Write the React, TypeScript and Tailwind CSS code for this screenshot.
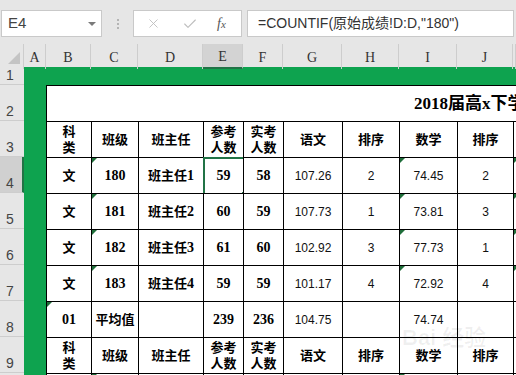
import { X, Check } from 'lucide-react';

type Kind = 'h' | 'b' | 'n';
type Cell = { t: string; k: Kind; tri?: boolean; sel?: boolean };

const headerRow: Cell[] = [
  { t: '科\n类', k: 'h' },
  { t: '班级', k: 'h' },
  { t: '班主任', k: 'h' },
  { t: '参考\n人数', k: 'h' },
  { t: '实考\n人数', k: 'h' },
  { t: '语文', k: 'h' },
  { t: '排序', k: 'h' },
  { t: '数学', k: 'h' },
  { t: '排序', k: 'h' },
  { t: '', k: 'h' },
];

const dataRows: [string, string, string, string, string, string, string, string, string][] = [
  ['文', '180', '班主任1', '59', '58', '107.26', '2', '74.45', '2'],
  ['文', '181', '班主任2', '60', '59', '107.73', '1', '73.81', '3'],
  ['文', '182', '班主任3', '61', '60', '102.92', '3', '77.73', '1'],
  ['文', '183', '班主任4', '59', '59', '101.17', '4', '72.92', '4'],
];

function buildRows(): Cell[][] {
  const rows: Cell[][] = [headerRow];
  dataRows.forEach((r, i) => {
    rows.push([
      { t: r[0], k: 'b' },
      { t: r[1], k: 'b', tri: true },
      { t: r[2], k: 'b' },
      { t: r[3], k: 'b', sel: i === 0 },
      { t: r[4], k: 'b' },
      { t: r[5], k: 'n' },
      { t: r[6], k: 'n' },
      { t: r[7], k: 'n', tri: true },
      { t: r[8], k: 'n' },
      { t: '', k: 'n', tri: true },
    ]);
  });
  rows.push([
    { t: '01', k: 'b', tri: true },
    { t: '平均值', k: 'b' },
    { t: '', k: 'b' },
    { t: '239', k: 'b' },
    { t: '236', k: 'b' },
    { t: '104.75', k: 'n' },
    { t: '', k: 'n' },
    { t: '74.74', k: 'n' },
    { t: '', k: 'n' },
    { t: '', k: 'n' },
  ]);
  rows.push(headerRow);
  rows.push([
    { t: '', k: 'n' },
    { t: '', k: 'n', tri: true },
    { t: '', k: 'n' },
    { t: '', k: 'n' },
    { t: '', k: 'n' },
    { t: '', k: 'n' },
    { t: '', k: 'n' },
    { t: '', k: 'n', tri: true },
    { t: '', k: 'n' },
    { t: '', k: 'n' },
  ]);
  return rows;
}

const kindClass: Record<Kind, string> = {
  h: "font-bold text-[13px] leading-[16px] text-black font-['Liberation_Serif','Noto_Sans_CJK_SC',serif]",
  b: "font-bold text-[13px] leading-[16px] text-black font-['Liberation_Serif','Noto_Sans_CJK_SC',serif]",
  n: "font-normal text-[12px] leading-[14px] text-[#111] font-['Liberation_Sans','Noto_Sans_CJK_SC',sans-serif]",
};

function renderText(t: string, k: Kind) {
  if (k !== 'b') return t;
  // digits a touch larger, as in the reference
  const parts = t.split(/(\d+)/).filter((p) => p !== '');
  return parts.map((p, i) =>
    /^\d+$/.test(p) ? (
      <span key={i} className="text-[14px]">
        {p}
      </span>
    ) : (
      <span key={i}>{p}</span>
    ),
  );
}

function TableCell({ c }: { c: Cell }) {
  const lines = c.t.split('\n');
  return (
    <div className="relative flex flex-col items-center justify-center border-l border-t border-black bg-white">
      {c.tri && (
        <div className="absolute left-0 top-0 h-0 w-0 border-t-[5px] border-r-[5px] border-t-[#1f6e3a] border-r-transparent" />
      )}
      {lines.map((l, i) => (
        <span key={i} className={kindClass[c.k] + ' whitespace-nowrap'}>
          {renderText(l, c.k)}
        </span>
      ))}
      {c.sel && (
        <div className="absolute -left-[1px] -top-[1px] h-[38px] w-[42px] border-2 border-[#217346]">
          <div className="absolute -bottom-[4px] -right-[4px] h-[5px] w-[5px] bg-[#217346]" />
        </div>
      )}
    </div>
  );
}

const colLetters = ['', 'A', 'B', 'C', 'D', 'E', 'F', 'G', 'H', 'I', 'J', ''];

export default function App() {
  const rows = buildRows();
  const rowLabels = ['1', '2', '3', '4', '5', '6', '7', '8', '9', ''];
  return (
    <div className="relative h-[375px] w-[516px] overflow-hidden bg-[#e6e6e6] font-['Liberation_Sans','Noto_Sans_CJK_SC',sans-serif]">
      {/* Formula bar */}
      <div className="flex h-[44px] items-start pt-[10px]">
        <div className="ml-[1px] flex h-[27px] w-[101px] items-center justify-between border border-[#c9c9c9] bg-white pl-[6px] pr-[5px]">
          <span className="text-[15px] text-[#444]">E4</span>
          <div className="h-0 w-0 border-x-[4px] border-t-[4px] border-x-transparent border-t-[#7a7a7a]" />
        </div>
        <div className="flex h-[27px] w-[31px] flex-col items-center justify-center gap-[2px]">
          <div className="h-[2px] w-[2px] bg-[#b4b4b4]" />
          <div className="h-[2px] w-[2px] bg-[#b4b4b4]" />
          <div className="h-[2px] w-[2px] bg-[#b4b4b4]" />
        </div>
        <div className="flex h-[27px] w-[109px] items-center border border-[#c9c9c9] bg-white">
          <X size={15} strokeWidth={1.4} color="#bdbdbd" className="ml-[12px]" />
          <Check size={16} strokeWidth={1.6} color="#bdbdbd" className="ml-[21px]" />
          <span className="ml-[19px] font-['Liberation_Serif',serif] text-[14px] italic text-[#555]">
            f<span className="text-[11px]">x</span>
          </span>
        </div>
        <div className="ml-[5px] mr-[2px] flex h-[27px] flex-1 items-center border border-[#c9c9c9] bg-white pl-[10px]">
          <span className="whitespace-nowrap text-[14px] text-[#333]">
            =COUNTIF(原始成绩!D:D,"180")
          </span>
        </div>
      </div>

      {/* Column headers */}
      <div className="grid h-[23px] grid-cols-[24px_22px_45px_47px_65px_40px_40px_59px_57px_58px_56px_1fr] bg-[#e6e6e6]">
        {colLetters.map((l, i) => (
          <div
            key={i}
            className={
              'relative flex items-center justify-center border-r border-[#cdcdcd] pt-[2px] font-[\'Liberation_Serif\',serif] text-[14px] text-[#333] ' +
              (l === 'E' ? 'border-b-2 border-b-[#217346] bg-[#d3d3d3]' : '')
            }
          >
            {i === 0 && (
              <div className="absolute bottom-[5px] right-[3px] h-0 w-0 border-b-[12px] border-l-[12px] border-b-[#c4c4c4] border-l-transparent" />
            )}
            {l}
          </div>
        ))}
      </div>

      {/* Body */}
      <div className="flex">
        <div className="flex w-[24px] flex-col">
          {rowLabels.map((l, i) => (
            <div
              key={i}
              className={
                'flex shrink-0 items-end border-b border-[#cdcdcd] pb-[1px] pl-[6px] text-[14px] leading-[16px] text-[#444] ' +
                (i === 0 ? 'h-[18px] ' : 'h-[36px] ') +
                (l === '4' ? 'border-r-2 border-r-[#217346] bg-[#d0d0d0]' : 'bg-[#e6e6e6]')
              }
            >
              {l}
            </div>
          ))}
        </div>
        <div className="h-[308px] flex-1 overflow-hidden bg-[#0ea34f] pl-[22px] pt-[18px]">
          <div className="grid auto-rows-[36px] grid-cols-[45px_47px_65px_40px_40px_59px_57px_58px_56px_1fr] bg-white">
            <div className="col-span-10 flex items-center overflow-hidden whitespace-nowrap border-l border-t border-black pl-[367px] font-['Liberation_Serif','Noto_Sans_CJK_SC',serif] text-[17px] font-bold text-black">
              2018届高x下学期
            </div>
            {rows.map((r, ri) => r.map((c, ci) => <TableCell key={ri + '-' + ci} c={c} />))}
          </div>
        </div>
      </div>

      {/* watermark */}
      <div className="pointer-events-none absolute left-[402px] top-[326px] flex flex-col items-start text-black/[0.06]">
        <span className="whitespace-nowrap text-[22px] font-bold leading-[24px]">Bai 经验</span>
      </div>
    </div>
  );
}
